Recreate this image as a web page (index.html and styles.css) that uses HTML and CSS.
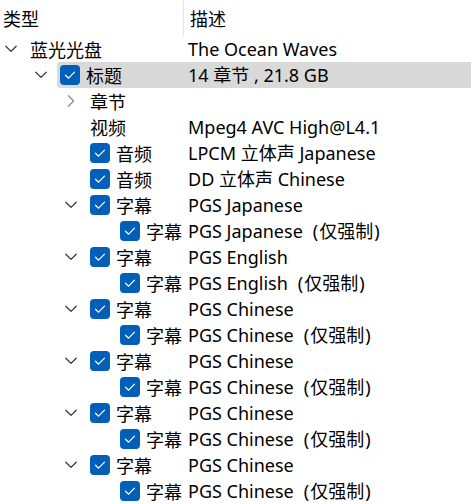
FILE: index.html
```html
<!DOCTYPE html>
<html lang="zh-CN">
<head>
<meta charset="utf-8">
<title>Tree</title>
<link rel="stylesheet" href="styles.css">
</head>
<body>
<div class="tree">
  <div class="header">
    <div class="h1">类型</div>
    <div class="h2">描述</div>
  </div>

  <div class="row l0">
    <div class="gutter"><svg class="exp" viewBox="0 0 12 12"><path d="M0.8 3.2 L6 8.4 L11.2 3.2"/></svg></div>
    <div class="body"><div class="c1"><span class="t">蓝光光盘</span></div><div class="c2">The Ocean Waves</div></div>
  </div>

  <div class="row l1 sel">
    <div class="gutter"><svg class="exp" viewBox="0 0 12 12"><path d="M0.8 3.2 L6 8.4 L11.2 3.2"/></svg></div>
    <div class="body"><div class="c1"><span class="cb"><svg viewBox="0 0 20 20"><path d="M5.5 10.2 L8.6 13.2 L14.5 7.2"/></svg></span><span class="t">标题</span></div><div class="c2">14 章节 , 21.8 GB</div></div>
  </div>

  <div class="row l2">
    <div class="gutter"><svg class="exp right" viewBox="0 0 12 12"><path d="M3.5 0.8 L8.5 6 L3.5 11.2"/></svg></div>
    <div class="body"><div class="c1"><span class="t">章节</span></div><div class="c2"></div></div>
  </div>

  <div class="row l2">
    <div class="gutter"></div>
    <div class="body"><div class="c1"><span class="t">视频</span></div><div class="c2">Mpeg4 AVC High@L4.1</div></div>
  </div>

  <div class="row l2">
    <div class="gutter"></div>
    <div class="body"><div class="c1"><span class="cb"><svg viewBox="0 0 20 20"><path d="M5.5 10.2 L8.6 13.2 L14.5 7.2"/></svg></span><span class="t">音频</span></div><div class="c2">LPCM 立体声 Japanese</div></div>
  </div>

  <div class="row l2">
    <div class="gutter"></div>
    <div class="body"><div class="c1"><span class="cb"><svg viewBox="0 0 20 20"><path d="M5.5 10.2 L8.6 13.2 L14.5 7.2"/></svg></span><span class="t">音频</span></div><div class="c2">DD 立体声 Chinese</div></div>
  </div>

  <div class="row l2">
    <div class="gutter"><svg class="exp" viewBox="0 0 12 12"><path d="M0.8 3.2 L6 8.4 L11.2 3.2"/></svg></div>
    <div class="body"><div class="c1"><span class="cb"><svg viewBox="0 0 20 20"><path d="M5.5 10.2 L8.6 13.2 L14.5 7.2"/></svg></span><span class="t">字幕</span></div><div class="c2">PGS Japanese</div></div>
  </div>
  <div class="row l3">
    <div class="gutter"></div>
    <div class="body"><div class="c1"><span class="cb"><svg viewBox="0 0 20 20"><path d="M5.5 10.2 L8.6 13.2 L14.5 7.2"/></svg></span><span class="t">字幕</span></div><div class="c2">PGS Japanese<span class="po">(</span>仅强制<span class="pc">)</span></div></div>
  </div>

  <div class="row l2">
    <div class="gutter"><svg class="exp" viewBox="0 0 12 12"><path d="M0.8 3.2 L6 8.4 L11.2 3.2"/></svg></div>
    <div class="body"><div class="c1"><span class="cb"><svg viewBox="0 0 20 20"><path d="M5.5 10.2 L8.6 13.2 L14.5 7.2"/></svg></span><span class="t">字幕</span></div><div class="c2">PGS English</div></div>
  </div>
  <div class="row l3">
    <div class="gutter"></div>
    <div class="body"><div class="c1"><span class="cb"><svg viewBox="0 0 20 20"><path d="M5.5 10.2 L8.6 13.2 L14.5 7.2"/></svg></span><span class="t">字幕</span></div><div class="c2">PGS English<span class="po">(</span>仅强制<span class="pc">)</span></div></div>
  </div>

  <div class="row l2">
    <div class="gutter"><svg class="exp" viewBox="0 0 12 12"><path d="M0.8 3.2 L6 8.4 L11.2 3.2"/></svg></div>
    <div class="body"><div class="c1"><span class="cb"><svg viewBox="0 0 20 20"><path d="M5.5 10.2 L8.6 13.2 L14.5 7.2"/></svg></span><span class="t">字幕</span></div><div class="c2">PGS Chinese</div></div>
  </div>
  <div class="row l3">
    <div class="gutter"></div>
    <div class="body"><div class="c1"><span class="cb"><svg viewBox="0 0 20 20"><path d="M5.5 10.2 L8.6 13.2 L14.5 7.2"/></svg></span><span class="t">字幕</span></div><div class="c2">PGS Chinese<span class="po">(</span>仅强制<span class="pc">)</span></div></div>
  </div>

  <div class="row l2">
    <div class="gutter"><svg class="exp" viewBox="0 0 12 12"><path d="M0.8 3.2 L6 8.4 L11.2 3.2"/></svg></div>
    <div class="body"><div class="c1"><span class="cb"><svg viewBox="0 0 20 20"><path d="M5.5 10.2 L8.6 13.2 L14.5 7.2"/></svg></span><span class="t">字幕</span></div><div class="c2">PGS Chinese</div></div>
  </div>
  <div class="row l3">
    <div class="gutter"></div>
    <div class="body"><div class="c1"><span class="cb"><svg viewBox="0 0 20 20"><path d="M5.5 10.2 L8.6 13.2 L14.5 7.2"/></svg></span><span class="t">字幕</span></div><div class="c2">PGS Chinese<span class="po">(</span>仅强制<span class="pc">)</span></div></div>
  </div>

  <div class="row l2">
    <div class="gutter"><svg class="exp" viewBox="0 0 12 12"><path d="M0.8 3.2 L6 8.4 L11.2 3.2"/></svg></div>
    <div class="body"><div class="c1"><span class="cb"><svg viewBox="0 0 20 20"><path d="M5.5 10.2 L8.6 13.2 L14.5 7.2"/></svg></span><span class="t">字幕</span></div><div class="c2">PGS Chinese</div></div>
  </div>
  <div class="row l3">
    <div class="gutter"></div>
    <div class="body"><div class="c1"><span class="cb"><svg viewBox="0 0 20 20"><path d="M5.5 10.2 L8.6 13.2 L14.5 7.2"/></svg></span><span class="t">字幕</span></div><div class="c2">PGS Chinese<span class="po">(</span>仅强制<span class="pc">)</span></div></div>
  </div>

  <div class="row l2">
    <div class="gutter"><svg class="exp" viewBox="0 0 12 12"><path d="M0.8 3.2 L6 8.4 L11.2 3.2"/></svg></div>
    <div class="body"><div class="c1"><span class="cb"><svg viewBox="0 0 20 20"><path d="M5.5 10.2 L8.6 13.2 L14.5 7.2"/></svg></span><span class="t">字幕</span></div><div class="c2">PGS Chinese</div></div>
  </div>
  <div class="row l3">
    <div class="gutter"></div>
    <div class="body"><div class="c1"><span class="cb"><svg viewBox="0 0 20 20"><path d="M5.5 10.2 L8.6 13.2 L14.5 7.2"/></svg></span><span class="t">字幕</span></div><div class="c2">PGS Chinese<span class="po">(</span>仅强制<span class="pc">)</span></div></div>
  </div>
</div>
</body>
</html>
```

FILE: styles.css
```css
html, body {
  margin: 0;
  padding: 0;
  background: #ffffff;
}

.tree {
  width: 471px;
  color: #000000;
  font-family: "Noto Sans", "Noto Sans CJK SC", sans-serif;
  font-size: 18px;
}

.header {
  display: flex;
  height: 36px;
  align-items: stretch;
}

.h1 {
  width: 184px;
  flex: none;
  box-sizing: border-box;
  padding-left: 3px;
  line-height: 36px;
  border-right: 1px solid #e5e5e5;
  font-family: "Noto Sans CJK SC", sans-serif;
}

.h2 {
  padding-left: 6px;
  line-height: 36px;
  font-family: "Noto Sans CJK SC", sans-serif;
}

.row {
  display: flex;
  height: 26px;
  line-height: 26px;
}

.l0 { --i: 5px;  --g: 27px; }
.l1 { --i: 35px; --g: 57px; }
.l2 { --i: 65px; --g: 87px; }
.l3 { --i: 95px; --g: 117px; }

.gutter {
  flex: none;
  width: var(--g);
  box-sizing: border-box;
  padding-left: var(--i);
  display: flex;
  align-items: center;
}

.exp {
  width: 12px;
  height: 12px;
  fill: none;
  stroke: #3a3a3a;
  stroke-width: 1.3;
  stroke-linecap: round;
  stroke-linejoin: round;
}

.exp.right {
  stroke: #8e8e8e;
}

.body {
  flex: 1;
  display: flex;
  align-items: stretch;
  border-radius: 3px 0 0 3px;
}

.sel .body {
  background: #d9d9d9;
}

.c1 {
  flex: none;
  width: calc(184px - var(--g));
  box-sizing: border-box;
  padding-left: 3px;
  display: flex;
  align-items: center;
  white-space: nowrap;
  font-family: "Noto Sans CJK SC", sans-serif;
}

.cb {
  flex: none;
  width: 20px;
  height: 20px;
  margin-right: 6px;
  border-radius: 4px;
  background: #005fb8;
  display: flex;
}

.cb svg {
  width: 20px;
  height: 20px;
  fill: none;
  stroke: #ffffff;
  stroke-width: 1.2;
  stroke-linecap: round;
  stroke-linejoin: round;
}

.c2 {
  flex: 1;
  padding-left: 4px;
  white-space: nowrap;
}

.po {
  padding: 0 1px 0 10px;
}

.pc {
  padding-left: 1px;
}
```
